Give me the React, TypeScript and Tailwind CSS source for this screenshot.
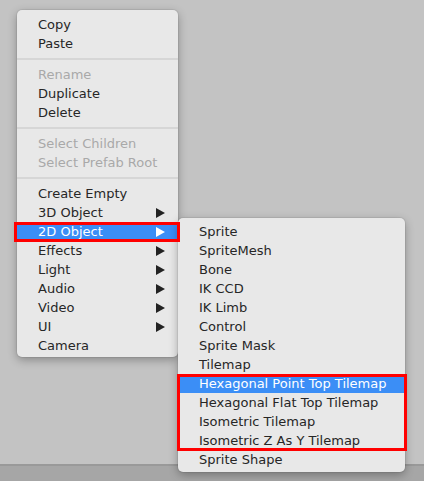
import { Fragment } from "react"

type Item = { label: string; disabled?: boolean; sub?: boolean; active?: boolean } | "sep"

const mainItems: Item[] = [
  { label: "Copy" },
  { label: "Paste" },
  "sep",
  { label: "Rename", disabled: true },
  { label: "Duplicate" },
  { label: "Delete" },
  "sep",
  { label: "Select Children", disabled: true },
  { label: "Select Prefab Root", disabled: true },
  "sep",
  { label: "Create Empty" },
  { label: "3D Object", sub: true },
  { label: "2D Object", sub: true, active: true },
  { label: "Effects", sub: true },
  { label: "Light", sub: true },
  { label: "Audio", sub: true },
  { label: "Video", sub: true },
  { label: "UI", sub: true },
  { label: "Camera" },
]

const subItems: Item[] = [
  { label: "Sprite" },
  { label: "SpriteMesh" },
  { label: "Bone" },
  { label: "IK CCD" },
  { label: "IK Limb" },
  { label: "Control" },
  { label: "Sprite Mask" },
  { label: "Tilemap" },
  { label: "Hexagonal Point Top Tilemap", active: true },
  { label: "Hexagonal Flat Top Tilemap" },
  { label: "Isometric Tilemap" },
  { label: "Isometric Z As Y Tilemap" },
  { label: "Sprite Shape" },
]

function Arrow({ white }: { white?: boolean }) {
  return (
    <svg width="9" height="10" viewBox="0 0 9 10" className="mr-[13px]">
      <path d="M0 0 L9 5 L0 10 Z" fill={white ? "#ffffff" : "#222222"} />
    </svg>
  )
}

function MenuList({ items }: { items: Item[] }) {
  return (
    <>
      {items.map((it, idx) => {
        if (it === "sep") {
          return (
            <div key={idx} className="h-[12px] flex items-center">
              <div className="h-[2px] w-full bg-[#d6d6d6]" />
            </div>
          )
        }
        return (
          <Fragment key={idx}>
            <div
              className={
                "h-[19px] flex items-center justify-between pl-[21px] " +
                (it.active ? "bg-[#3b8ef6] text-white" : it.disabled ? "text-[#a9a9a9]" : "text-[#262626]")
              }
            >
              <span className="leading-none">{it.label}</span>
              {it.sub && <Arrow white={it.active} />}
            </div>
          </Fragment>
        )
      })}
    </>
  )
}

export default function App() {
  return (
    <div
      className="relative w-[424px] h-[481px] bg-[#c3c3c3] overflow-hidden flex flex-col text-[13px]"
      style={{ fontFamily: '"DejaVu Sans", Verdana, sans-serif' }}
    >
      <div className="flex-1" />
      <div className="h-[17px] bg-[#a6a6a6] border-t-[2px] border-[#999999]" />

      <div className="absolute left-[17px] top-[10px] w-[161px] h-[347px] bg-[#e8e8e8] rounded-[5px] pt-[5px] shadow-[0_3px_10px_rgba(0,0,0,0.3),0_0_0_1px_rgba(0,0,0,0.06)]">
        <MenuList items={mainItems} />
      </div>

      <div className="absolute left-[178px] top-[218px] w-[227px] h-[254px] bg-[#e8e8e8] rounded-[5px] pt-[4px] shadow-[0_3px_10px_rgba(0,0,0,0.3),0_0_0_1px_rgba(0,0,0,0.06)]">
        <MenuList items={subItems} />
      </div>

      <div className="absolute left-[14px] top-[222px] w-[166px] h-[20px] border-[3px] border-[#ff0000]" />
      <div className="absolute left-[177px] top-[374px] w-[230px] h-[77px] border-[3px] border-[#ff0000]" />
    </div>
  )
}
